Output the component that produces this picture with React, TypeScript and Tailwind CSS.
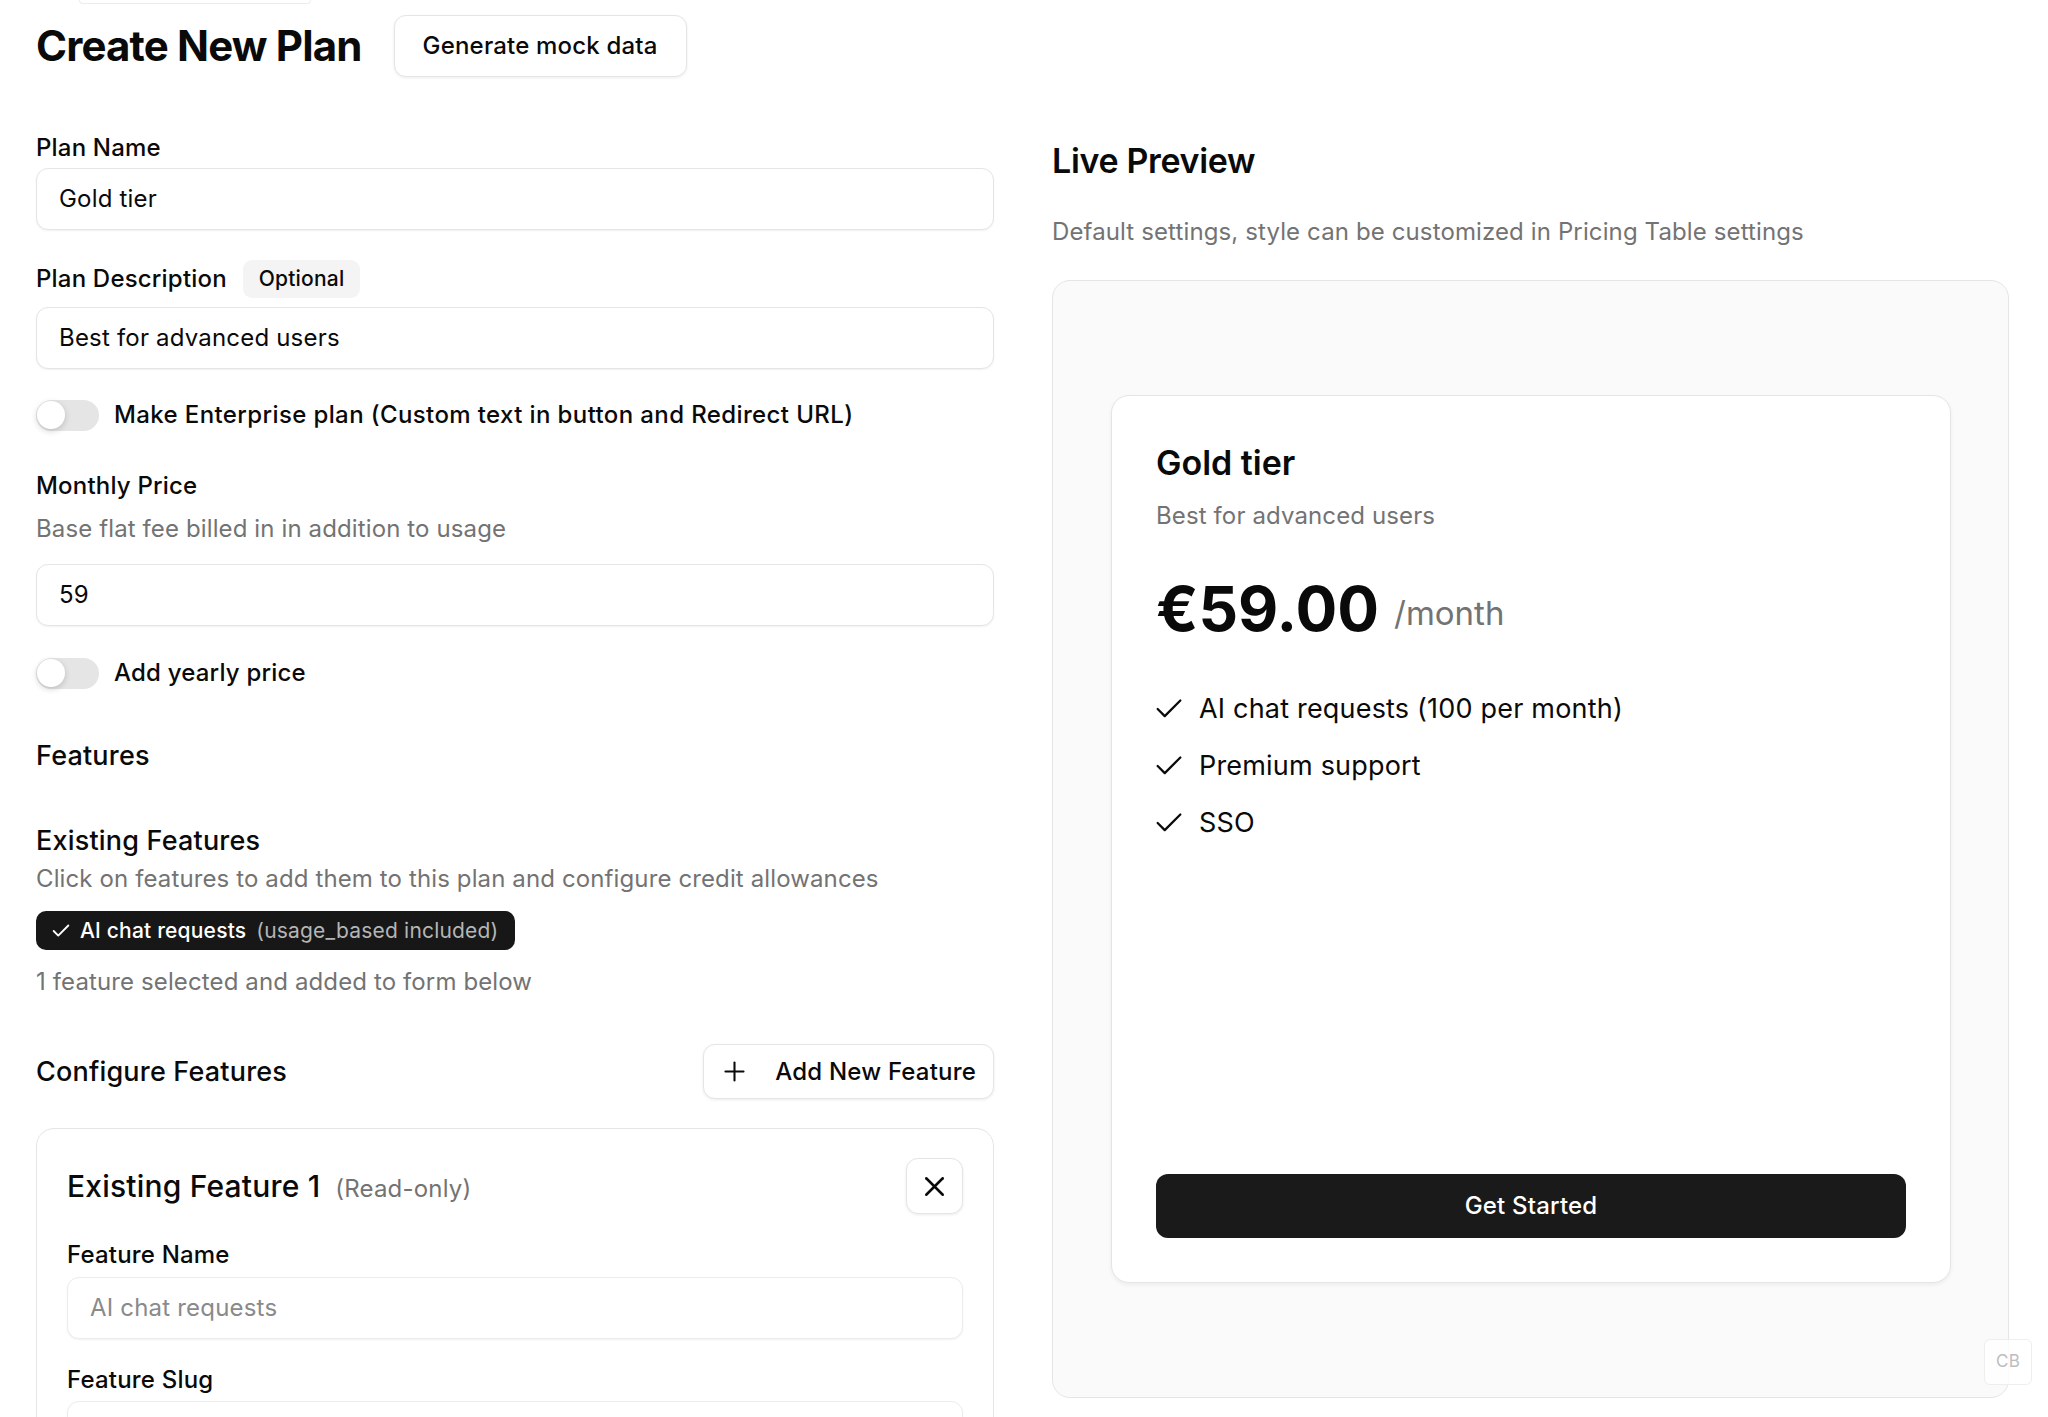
import { Check, Plus, X } from "lucide-react";

const features = ["AI chat requests (100 per month)", "Premium support", "SSO"];

const Toggle = () => (
    <div className="relative h-[31px] w-[63px] shrink-0 rounded-full bg-[#e5e5e5]">
        <div className="absolute left-[1px] top-[1.5px] h-[28px] w-[28px] rounded-full bg-white shadow-[0_2px_6px_rgba(0,0,0,0.18)]" />
    </div>
);

const Field = ({ value, muted }: { value: string; muted?: boolean }) => (
    <div
        className={
            "flex h-[62px] items-center rounded-[12px] border bg-white px-[22px] text-[24px] shadow-[0_1px_2px_rgba(0,0,0,0.06)] " +
            (muted ? "border-[#ececec] text-[#8a8a8a]" : "border-[#e5e5e5] text-[#0a0a0a]")
        }>
        {value}
    </div>
);

const Label = ({ children, className = "" }: { children: React.ReactNode; className?: string }) => (
    <div className={"text-[24px] font-medium leading-[32px] " + className}>{children}</div>
);

// grey helper text under labels
const Hint = ({ children, className = "" }: { children: React.ReactNode; className?: string }) => (
    <div className={"text-[24px] leading-[32px] tracking-[0.005em] text-[#737373] " + className}>{children}</div>
);

export default function App() {
    return (
        <div className="relative min-h-screen bg-white pl-[36px] font-['Inter','Noto_Sans',sans-serif] tracking-[0.012em] text-[#0a0a0a]">
            <div className="grid grid-cols-[958px_957px] gap-x-[58px]">
                {/* form */}
                <div className="flex flex-col">
                    <div className="ml-[43px] h-[4px] w-[232px] rounded-b-[10px] border-x border-b border-[#ececec]" />
                    <div className="mt-[11px] flex h-[62px] items-center gap-[32px]">
                        <h1 className="text-[42px] font-bold leading-[54px] tracking-[-0.02em]">Create New Plan</h1>
                        <button className="h-[62px] rounded-[12px] border border-[#e5e5e5] bg-white px-[28px] text-[24px] font-medium shadow-[0_1px_3px_rgba(0,0,0,0.08)]">
                            Generate mock data
                        </button>
                    </div>

                    <Label className="mt-[55px]">Plan Name</Label>
                    <div className="mt-[4px]">
                        <Field value="Gold tier" />
                    </div>

                    <div className="mt-[30px] flex h-[38px] items-center gap-[16px]">
                        <Label>Plan Description</Label>
                        <span className="flex h-[38px] items-center rounded-[9px] bg-[#f4f4f4] px-[16px] text-[21px] font-medium">
                            Optional
                        </span>
                    </div>
                    <div className="mt-[9px]">
                        <Field value="Best for advanced users" />
                    </div>

                    <div className="mt-[28px] flex h-[36px] items-center gap-[15px]">
                        <Toggle />
                        <Label className="tracking-[0.016em]">Make Enterprise plan (Custom text in button and Redirect URL)</Label>
                    </div>

                    <Label className="mt-[37px]">Monthly Price</Label>
                    <Hint className="mt-[11px]">Base flat fee billed in in addition to usage</Hint>
                    <div className="mt-[19px]">
                        <Field value="59" />
                    </div>

                    <div className="mt-[29px] flex h-[36px] items-center gap-[15px]">
                        <Toggle />
                        <Label>Add yearly price</Label>
                    </div>

                    <div className="mt-[47px] text-[27px] font-medium leading-[36px]">Features</div>

                    <div className="mt-[49px] text-[27px] font-medium leading-[36px]">Existing Features</div>
                    <Hint className="mt-[4px]">Click on features to add them to this plan and configure credit allowances</Hint>
                    <div className="mt-[16px] flex">
                        <div className="flex h-[39px] items-center rounded-[10px] bg-[#171717] pl-[14px] pr-[17px] text-[21px] text-white">
                            <Check size={22} strokeWidth={2} />
                            <span className="ml-[8px] font-medium">AI chat requests</span>
                            <span className="ml-[10px] text-[#b5b5b5]">(usage_based included)</span>
                        </div>
                    </div>
                    <Hint className="mt-[16px]">1 feature selected and added to form below</Hint>

                    <div className="mt-[46px] flex h-[55px] items-center justify-between">
                        <div className="text-[27px] font-medium leading-[36px]">Configure Features</div>
                        <button className="flex h-[55px] items-center gap-[25px] rounded-[12px] border border-[#e5e5e5] bg-white pl-[15px] pr-[17px] text-[24px] font-medium shadow-[0_1px_3px_rgba(0,0,0,0.08)]">
                            <Plus size={31} strokeWidth={1.6} />
                            Add New Feature
                        </button>
                    </div>

                    <div className="mt-[29px] rounded-[18px] border border-[#e5e5e5] bg-white px-[30px] pb-[40px] pt-[29px]">
                        <div className="flex h-[56px] items-center justify-between">
                            <div className="flex items-baseline gap-[15px]">
                                <span className="text-[30px] font-medium leading-[40px]">Existing Feature 1</span>
                                <span className="text-[24px] text-[#737373]">(Read-only)</span>
                            </div>
                            <button className="flex h-[56px] w-[57px] items-center justify-center rounded-[12px] border border-[#e5e5e5] bg-white shadow-[0_1px_3px_rgba(0,0,0,0.08)]">
                                <X size={33} strokeWidth={1.8} />
                            </button>
                        </div>
                        <Label className="mt-[25px]">Feature Name</Label>
                        <div className="mt-[6px]">
                            <Field value="AI chat requests" muted />
                        </div>
                        <Label className="mt-[25px]">Feature Slug</Label>
                        <div className="mt-[5px]">
                            <Field value="" muted />
                        </div>
                    </div>
                </div>

                {/* preview */}
                <div className="flex flex-col">
                    <h2 className="mt-[139px] text-[34px] font-semibold leading-[44px] tracking-[-0.01em]">Live Preview</h2>
                    <Hint className="mt-[33px]">Default settings, style can be customized in Pricing Table settings</Hint>
                    <div className="mt-[32px] rounded-[18px] border border-[#e5e5e5] bg-[#fafafa] py-[114px] pl-[58px] pr-[57px]">
                        <div className="flex h-[888px] flex-col rounded-[18px] border border-[#e5e5e5] bg-white p-[44px] shadow-[0_2px_4px_rgba(0,0,0,0.06)]">
                            <div className="text-[34px] font-semibold leading-[46px] tracking-normal">Gold tier</div>
                            <Hint className="mt-[14px]">Best for advanced users</Hint>
                            <div className="mt-[42px] flex items-end gap-[15px]">
                                <span className="text-[62px] font-bold leading-[70px] tracking-normal">€59.00</span>
                                <span className="text-[33px] leading-[62px] tracking-normal text-[#737373]">/month</span>
                            </div>
                            <div className="mt-[49px] flex flex-col gap-[25px]">
                                {features.map((f) => (
                                    <div key={f} className="flex h-[32px] items-center gap-[13px]">
                                        <Check size={34} strokeWidth={1.6} className="-ml-[4px] shrink-0" />
                                        <span className="text-[27px] leading-[32px]">{f}</span>
                                    </div>
                                ))}
                            </div>
                            <div className="flex-1" />
                            <button className="h-[64px] w-full rounded-[12px] bg-[#1a1a1a] text-[24px] font-medium text-white">
                                Get Started
                            </button>
                        </div>
                    </div>
                </div>
            </div>

            {/* dev badge */}
            <div className="absolute left-[1984px] top-[1339px] flex h-[46px] w-[48px] items-center justify-center rounded-[6px] border border-[#eeeeee] bg-white/80 text-[17px] text-[#bdbdbd]">
                CB
            </div>
        </div>
    );
}
